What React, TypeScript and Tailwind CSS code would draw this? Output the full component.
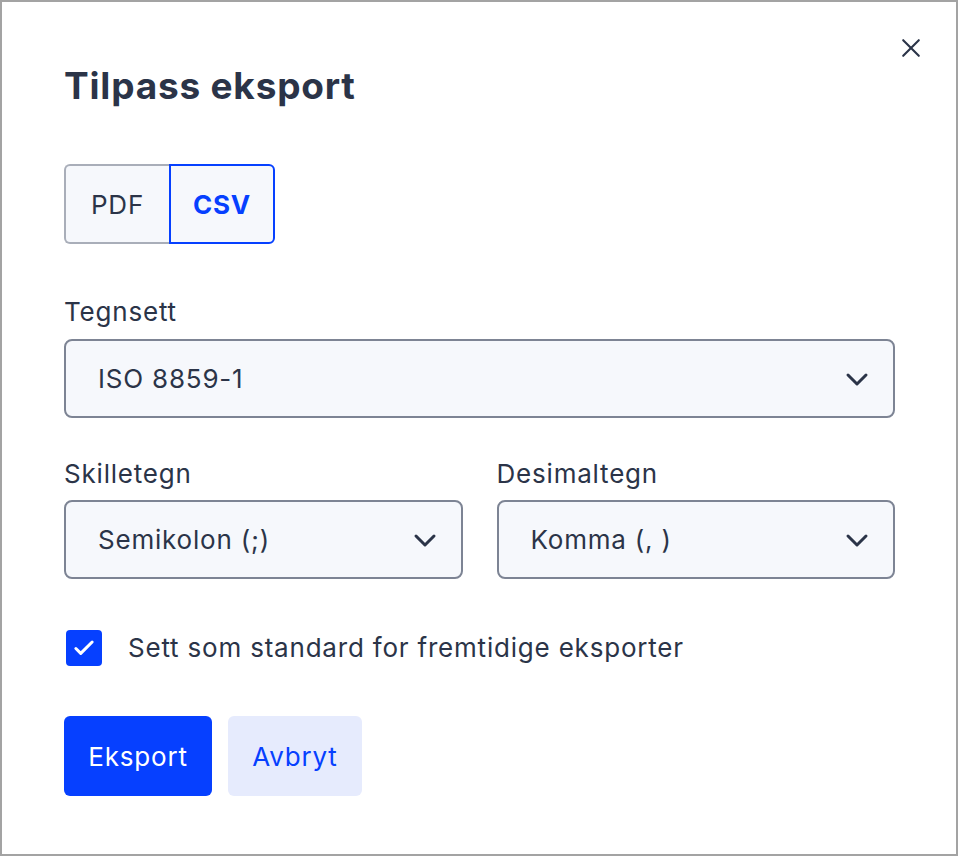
import { useState } from "react";

const Chevron = () => (
  <svg width="24" height="24" viewBox="0 0 24 24" fill="none" stroke="#2b3448" strokeWidth="3" strokeLinecap="round" strokeLinejoin="round">
    <path d="M3 8l9 9 9-9" />
  </svg>
);

const Select = ({ value, className = "" }: { value: string; className?: string }) => (
  <div className={`flex h-[79px] items-center justify-between rounded-lg border-2 border-[#7d8494] bg-[#f6f8fc] pl-[32px] pr-[24px] ${className}`}>
    <span>{value}</span>
    <Chevron />
  </div>
);

const App: React.FC = () => {
  const [format, setFormat] = useState<"PDF" | "CSV">("CSV");
  const [standard, setStandard] = useState(true);

  return (
    <div
      className="relative h-[856px] w-[958px] border-2 border-[#a3a3a3] bg-white pl-[62px] pr-[61px] pt-[62px] text-[26px] tracking-[0.8px] text-[#2b3448]"
      style={{ fontFamily: "Inter, 'Noto Sans', sans-serif" }}
    >
      <button className="absolute right-[30px] top-[31px] p-1">
        <svg width="22" height="22" viewBox="0 0 24 24" fill="none" stroke="#2b3448" strokeWidth="2.3" strokeLinecap="round">
          <path d="M3.5 3.5l17 17M20.5 3.5l-17 17" />
        </svg>
      </button>

      <h1 className="text-[37px] font-bold leading-[44px] tracking-[0.8px]">Tilpass eksport</h1>

      <div className="mt-[56px] flex h-[80px] w-[211px]">
        <button
          onClick={() => setFormat("PDF")}
          className={`w-[105px] rounded-l-md border-2 bg-[#f6f8fc] ${format === "PDF" ? "border-[#0640ff] font-bold text-[#0640ff]" : "border-r-0 border-[#a9aeb9]"}`}
        >
          PDF
        </button>
        <button
          onClick={() => setFormat("CSV")}
          className={`w-[106px] rounded-r-md border-2 bg-[#f6f8fc] ${format === "CSV" ? "border-[#0640ff] font-bold text-[#0640ff]" : "border-l-0 border-[#a9aeb9]"}`}
        >
          CSV
        </button>
      </div>

      <div className="mt-[52px] leading-[32px]">Tegnsett</div>
      <Select value="ISO 8859-1" className="mt-[11px]" />

      <div className="mt-[40px] grid grid-cols-2 gap-x-[34px]">
        <div>
          <div className="leading-[32px]">Skilletegn</div>
          <Select value="Semikolon (;)" className="mt-[10px]" />
        </div>
        <div>
          <div className="leading-[32px]">Desimaltegn</div>
          <Select value="Komma (, )" className="mt-[10px]" />
        </div>
      </div>

      <label className="mt-[51px] flex cursor-pointer items-center gap-[26px] pl-[2px]">
        <span
          onClick={() => setStandard(!standard)}
          className={`flex h-[36px] w-[36px] items-center justify-center rounded-[4px] ${standard ? "bg-[#0640ff]" : "border-2 border-[#7d8494] bg-white"}`}
        >
          {standard && (
            <svg width="26" height="26" viewBox="0 0 24 24" fill="none" stroke="white" strokeWidth="2.8" strokeLinecap="round" strokeLinejoin="round">
              <path d="M4.5 12.5l4.5 4.5L19.5 6.5" />
            </svg>
          )}
        </span>
        <span className="leading-[32px]">Sett som standard for fremtidige eksporter</span>
      </label>

      <div className="mt-[50px] flex gap-[16px]">
        <button className="h-[80px] w-[148px] rounded-md bg-[#0640ff] text-white">Eksport</button>
        <button className="h-[80px] w-[134px] rounded-md bg-[#e6ebfd] text-[#0640ff]">Avbryt</button>
      </div>
    </div>
  );
};

export default App;
